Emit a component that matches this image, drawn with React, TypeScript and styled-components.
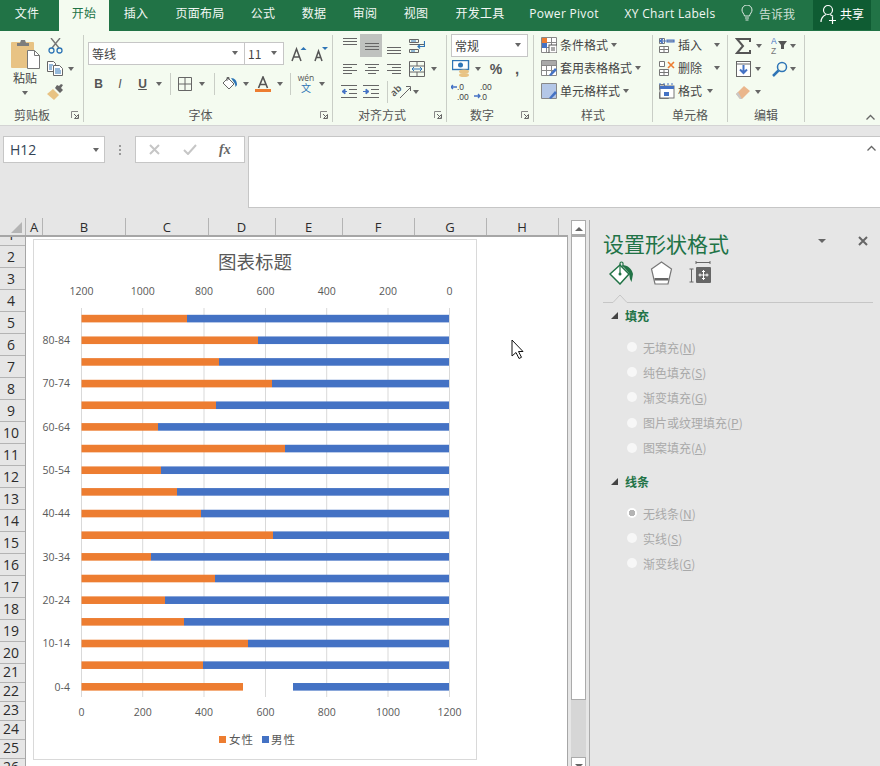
import React from "react";
import styled, { createGlobalStyle } from "styled-components";

const CJK = `"Noto Sans CJK SC", "Open Sans", sans-serif`;
const LATIN = `"Open Sans", "Noto Sans CJK SC", sans-serif`;
const GREEN = "#217346";
const BLUE = "#4472c4";
const ORANGE = "#ed7d31";

const GlobalStyle = createGlobalStyle`
  html, body {
    margin: 0;
    padding: 0;
    overflow: hidden;
    background: #e6e6e6;
  }
`;

const Page = styled.div`
  width: 880px;
  height: 766px;
  overflow: hidden;
  display: flex;
  flex-direction: column;
  background: #e6e6e6;
  font-family: ${CJK};
  font-size: 12px;
  color: #444;
`;

/* ---- tabs ---- */
const TabBar = styled.div`
  height: 31px;
  flex: none;
  display: flex;
  background: ${GREEN};
`;

const Tab = styled.div<{ $w: number; $active?: boolean; $shift?: number }>`
  width: ${p => p.$w}px;
  display: flex;
  align-items: center;
  justify-content: center;
  padding: 0 ${p => p.$shift ?? 0}px 5px 0;
  box-sizing: border-box;
  font-size: 12px;
  font-family: ${LATIN};
  letter-spacing: 0.3px;
  color: ${p => (p.$active ? GREEN : "#f2f7f4")};
  background: ${p => (p.$active ? "#f4fbf0" : "transparent")};
`;

const TellMe = styled.div`
  display: flex;
  align-items: center;
  gap: 5px;
  margin-left: 9px;
  width: 73px;
  padding-bottom: 5px;
  color: #cfe0d6;
`;

const Share = styled.div`
  width: 58px;
  height: 30px;
  display: flex;
  align-items: center;
  gap: 3px;
  padding: 0 0 3px 7px;
  box-sizing: border-box;
  background: #0f5c33;
  color: #fff;
`;

/* ---- ribbon ---- */
const Ribbon = styled.div`
  height: 95px;
  flex: none;
  box-sizing: border-box;
  display: flex;
  background: #f4fbf0;
  border-bottom: 1px solid #d4d4d4;
`;

const Group = styled.div<{ $w: number }>`
  width: ${p => p.$w}px;
  flex: none;
  display: flex;
  flex-direction: column;
`;

const GroupBody = styled.div<{ $left?: number }>`
  flex: 1;
  min-height: 0;
  padding: 3px 0 0 ${p => p.$left ?? 0}px;
  display: flex;
  flex-direction: column;
`;

const GroupLabel = styled.div`
  height: 20px;
  flex: none;
  box-sizing: border-box;
  display: flex;
  align-items: center;
  padding-bottom: 2px;
  color: #555;
`;

const LabelText = styled.span<{ $shift?: number }>`
  flex: 1;
  text-align: center;
  padding-right: ${p => p.$shift ?? 0}px;
`;

const Launcher = styled.svg`
  display: block;
  flex: none;
  margin: 2px 4px 0 0;
`;

const GroupDivider = styled.div`
  width: 1px;
  flex: none;
  margin: 4px 0 3px;
  background: #c9cec6;
`;

const RibbonEnd = styled.div`
  flex: 1;
  display: flex;
  align-items: flex-end;
  justify-content: flex-end;
  padding: 0 5px 5px 0;
`;

const Row = styled.div<{ $top?: number }>`
  height: 23px;
  flex: none;
  margin-top: ${p => p.$top ?? 0}px;
  display: flex;
  align-items: center;
`;

const Slot = styled.div<{ $w: number; $on?: boolean }>`
  width: ${p => p.$w}px;
  height: 23px;
  flex: none;
  display: flex;
  align-items: center;
  justify-content: center;
  background: ${p => (p.$on ? "#bfc2bf" : "transparent")};
`;

const Caret = styled.span<{ $left?: number; $top?: number }>`
  display: block;
  flex: none;
  width: 0;
  height: 0;
  margin-left: ${p => p.$left ?? 0}px;
  margin-top: ${p => p.$top ?? 0}px;
  border-left: 3.5px solid transparent;
  border-right: 3.5px solid transparent;
  border-top: 4px solid #666;
`;

const Sep = styled.span`
  display: block;
  width: 1px;
  height: 22px;
  background: #c9cec6;
`;

const Field = styled.div<{ $w: number; $joined?: boolean }>`
  width: ${p => p.$w}px;
  height: 23px;
  flex: none;
  box-sizing: border-box;
  display: flex;
  align-items: center;
  justify-content: space-between;
  padding: 0 6px 1px 3px;
  background: #fff;
  border: 1px solid #c6c6c6;
  border-left-width: ${p => (p.$joined ? 0 : 1)}px;
  color: #444;
`;

const PasteColumn = styled.div`
  width: 44px;
  flex: none;
  display: flex;
  flex-direction: column;
  align-items: center;
  padding: 5px 0 0 6px;
  box-sizing: border-box;
  gap: 1px;
`;

const PasteText = styled.span`
  font-size: 12px;
  line-height: 16px;
  color: #444;
`;

const ClipColumn = styled.div`
  display: flex;
  flex-direction: column;
`;

const ClipWrap = styled.div`
  display: flex;
`;

const LetterIcon = styled.span<{ $italic?: boolean; $under?: boolean; $size?: number }>`
  font-family: "Liberation Sans", sans-serif;
  font-size: ${p => p.$size ?? 12}px;
  font-weight: ${p => (p.$italic ? 400 : 700)};
  font-style: ${p => (p.$italic ? "italic" : "normal")};
  text-decoration: ${p => (p.$under ? "underline" : "none")};
  color: #555;
`;

const ActionRow = styled.div`
  height: 23px;
  flex: none;
  box-sizing: border-box;
  padding-bottom: 2px;
  display: flex;
  align-items: center;
  gap: 3px;
  color: #444;
`;

const ActionIcon = styled.div`
  width: 16px;
  height: 16px;
  flex: none;
`;

/* ---- formula bar ---- */
const FormulaRow = styled.div`
  height: 71px;
  flex: none;
  margin-top: 10px;
  display: flex;
  align-items: flex-start;
`;

const NameBox = styled.div`
  width: 102px;
  height: 27px;
  margin-left: 3px;
  box-sizing: border-box;
  display: flex;
  align-items: center;
  justify-content: space-between;
  padding: 0 5px 0 6px;
  background: #fff;
  border: 1px solid #c6c6c6;
  font-family: ${LATIN};
  font-size: 14px;
  color: #345;
`;

const Dots = styled.div`
  width: 30px;
  height: 27px;
  display: flex;
  flex-direction: column;
  align-items: center;
  justify-content: center;
  gap: 2px;
  & > i {
    width: 2px;
    height: 2px;
    background: #9a9a9a;
  }
`;

const FxBox = styled.div`
  width: 110px;
  height: 27px;
  box-sizing: border-box;
  display: flex;
  align-items: center;
  justify-content: space-around;
  padding: 0 2px;
  background: #fff;
  border: 1px solid #c6c6c6;
`;

const FxText = styled.span`
  font-family: "Liberation Serif", serif;
  font-size: 14px;
  font-weight: 700;
  font-style: italic;
  color: #666;
`;

const FormulaInput = styled.div`
  flex: 1;
  height: 72px;
  margin-left: 3px;
  box-sizing: border-box;
  display: flex;
  justify-content: flex-end;
  padding: 8px 4px 0 0;
  background: #fff;
  border: 1px solid #c6c6c6;
  border-right: 0;
`;

/* ---- sheet ---- */
const Workspace = styled.div`
  flex: 1;
  min-height: 0;
  margin-top: 11px;
  display: flex;
`;

const Sheet = styled.div`
  width: 568px;
  flex: none;
  display: flex;
  flex-direction: column;
`;

const ColumnHeader = styled.div`
  height: 19px;
  flex: none;
  box-sizing: border-box;
  display: flex;
  border-bottom: 2px solid #a6a6a6;
`;

const Corner = styled.div`
  width: 26px;
  flex: none;
  display: flex;
  align-items: flex-end;
  justify-content: flex-end;
  padding: 0 3px 2px 0;
  box-sizing: border-box;
  border-right: 1px solid #b4b4b4;
`;

const ColumnCell = styled.div<{ $w: number }>`
  width: ${p => p.$w}px;
  flex: none;
  box-sizing: border-box;
  display: flex;
  align-items: center;
  justify-content: center;
  border-right: 1px solid #b4b4b4;
  font-family: ${LATIN};
  font-size: 13px;
  color: #2c2c2c;
`;

const SheetBody = styled.div`
  flex: 1;
  min-height: 0;
  display: flex;
  overflow: hidden;
`;

const RowHeader = styled.div`
  width: 26px;
  flex: none;
  box-sizing: border-box;
  border-right: 1px solid #a6a6a6;
  overflow: hidden;
`;

const RowCell = styled.div<{ $h: number }>`
  height: ${p => p.$h}px;
  box-sizing: border-box;
  display: flex;
  align-items: flex-end;
  justify-content: center;
  padding-right: 3px;
  line-height: 20px;
  border-bottom: 1px solid #b4b4b4;
  font-family: ${LATIN};
  font-size: 14px;
  color: #2c2c2c;
`;

const Canvas = styled.div`
  flex: 1;
  position: relative;
  box-sizing: border-box;
  padding: 2px 0 0 7px;
  background: #fff;
  border-right: 1px solid #a6a6a6;
`;

const ChartFrame = styled.div`
  width: 444px;
  height: 521px;
  box-sizing: border-box;
  border: 1px solid #d9d9d9;
  overflow: hidden;
`;

const ChartSvg = styled.svg`
  display: block;
  margin: -1px;
  font-family: ${LATIN};
`;

const Pointer = styled.svg`
  position: absolute;
  left: 485px;
  top: 102px;
`;

const ScrollBar = styled.div`
  width: 15px;
  flex: none;
  margin: 2px 3px 0;
  display: flex;
  flex-direction: column;
  background: #d6d6d6;
`;

const ScrollButton = styled.div<{ $h: number }>`
  height: ${p => p.$h}px;
  flex: none;
  box-sizing: border-box;
  display: flex;
  justify-content: center;
  padding-top: 6px;
  background: #fff;
  border: 1px solid #ababab;
`;

const ScrollThumb = styled.div`
  height: 465px;
  flex: none;
  box-sizing: border-box;
  margin-bottom: 57px;
  background: #fff;
  border: 1px solid #ababab;
  border-top-width: 2px;
`;

const UpTriangle = styled.span`
  display: block;
  width: 0;
  height: 0;
  border-left: 4px solid transparent;
  border-right: 4px solid transparent;
  border-bottom: 4px solid #666;
`;

const DownTriangle = styled(UpTriangle)`
  border-bottom: 0;
  border-top: 4px solid #666;
`;

/* ---- side panel ---- */
const Panel = styled.div`
  flex: 1;
  margin-top: 2px;
  box-sizing: border-box;
  border-left: 1px solid #ababab;
  padding: 0 7px 0 13px;
  display: flex;
  flex-direction: column;
`;

const PanelHead = styled.div`
  height: 41px;
  flex: none;
  display: flex;
  align-items: center;
  justify-content: space-between;
  padding: 5px 5px 0 0;
  box-sizing: border-box;
`;

const PanelTitle = styled.div`
  font-size: 21px;
  color: ${GREEN};
`;

const PanelTools = styled.div`
  display: flex;
  align-items: center;
  gap: 32px;
  margin-bottom: 4px;
`;

const PanelTabs = styled.div`
  height: 33px;
  flex: none;
  display: flex;
  align-items: flex-start;
  padding-left: 6px;
  gap: 16px;
`;

const PanelRule = styled.svg`
  display: block;
  flex: none;
`;

const Section = styled.div<{ $gap: number }>`
  height: 25px;
  flex: none;
  margin-top: ${p => p.$gap}px;
  display: flex;
  align-items: center;
  gap: 7px;
  padding-left: 8px;
  font-size: 12px;
  font-weight: 700;
  color: ${GREEN};
`;

const SectionMark = styled.span`
  display: block;
  width: 0;
  height: 0;
  border-left: 7px solid transparent;
  border-bottom: 7px solid #444;
`;

const OptionList = styled.div`
  margin-top: 9px;
  display: flex;
  flex-direction: column;
  gap: 5px;
`;

const Option = styled.div`
  height: 20.2px;
  display: flex;
  align-items: center;
  gap: 6px;
  padding-left: 24px;
  color: #a9a9a9;
  font-size: 12px;
`;

const Radio = styled.span<{ $on?: boolean }>`
  width: 10px;
  height: 10px;
  flex: none;
  border-radius: 50%;
  background: ${p =>
    p.$on ? "radial-gradient(circle, #b4b4b4 0 3px, #fff 3.5px)" : "#f7f7f7"};
`;

const Mnemonic = styled.span`
  text-decoration: underline;
`;

/* ---- icons ---- */
const Svg: React.FC<{ w?: number; h?: number; children: React.ReactNode }> = ({ w = 16, h = 16, children }) => (
  <svg width={w} height={h} viewBox={`0 0 ${w} ${h}`} style={{ display: "block", flex: "none" }}>
    {children}
  </svg>
);

const LauncherIcon = () => (
  <Launcher width="8" height="8" viewBox="0 0 8 8">
    <path d="M.5 7V.5H7" fill="none" stroke="#888" />
    <path d="M3 3l3.5 3.5M7.5 3.5v4h-4z" fill="none" stroke="#666" />
  </Launcher>
);

const PasteIcon = () => (
  <Svg w={29} h={30}>
    <rect x="0" y="3" width="23" height="26" rx="1" fill="#e8c384" />
    <path d="M6 4h3l1-3h4l1 3h3v3H6z" fill="#7d7d7d" />
    <path d="M16.500 11.500h7l5 5v13h-12z" fill="#fff" stroke="#777" />
    <path d="M23.500 11.500v5h5" fill="none" stroke="#777" />
  </Svg>
);

const CutIcon = () => (
  <Svg w={15} h={16}>
    <path d="M3 0l8 10M12 0L4 10" stroke="#777" strokeWidth="1.4" />
    <circle cx="3.500" cy="12.500" r="2.500" fill="none" stroke="#2e75b6" strokeWidth="1.300" />
    <circle cx="11.500" cy="12.500" r="2.500" fill="none" stroke="#2e75b6" strokeWidth="1.300" />
  </Svg>
);

const CopyIcon = () => (
  <Svg w={16} h={15}>
    <path d="M.5.500h6l2 2v8h-8z" fill="#fff" stroke="#666" />
    <path d="M6.500 4.500h6l3 3v7h-9z" fill="#fff" stroke="#666" />
    <path d="M2 4h4M2 6h3M2 8h3" stroke="#2e75b6" />
    <path d="M8 8h5M8 10h6M8 12h6" stroke="#2e75b6" />
  </Svg>
);

const BrushIcon = () => (
  <Svg w={17} h={16}>
    <path d="M0 10l6-5 6 6-5 5z" fill="#e8c384" />
    <path d="M8 4l5 5 3-3-2-2 2-3-2-1-2 2-2-1z" fill="#666" />
  </Svg>
);

const GrowFont: React.FC<{ up?: boolean }> = ({ up }) => (
  <Svg w={16} h={16}>
    <path
      d={up ? "M1 15L5.500 3 10 15M2.800 11h5.400" : "M2 15L5.500 5 9 15M3.300 11.500h4.400"}
      fill="none"
      stroke="#555"
      strokeWidth="1.500"
    />
    <path d={up ? "M9.500 4l3-3 3 3z" : "M9 1h6l-3 3z"} fill="#2e75b6" />
  </Svg>
);

const BorderIcon = () => (
  <Svg w={14} h={14}>
    <path d="M.5.500h13v13H.5zM7 .5v13M.5 7h13" fill="none" stroke="#666" />
  </Svg>
);

const BucketIcon = () => (
  <Svg w={16} h={15}>
    <path d="M1 7l5-5 6 6-5 5z" fill="#fff" stroke="#666" />
    <path d="M5 5V1.500h2V4" fill="none" stroke="#666" />
    <path d="M9 2c4 0 6 3 6 7l-1.500 2L13 8z" fill="#2e75b6" />
  </Svg>
);

const FontColorIcon = () => (
  <Svg w={16} h={16}>
    <path d="M3.500 12L8 1l4.500 11M5 8.500h6" fill="none" stroke="#555" strokeWidth="1.600" />
    <rect x="0" y="13" width="16" height="3" fill={ORANGE} />
  </Svg>
);

const WenIcon = () => (
  <svg width="26" height="24" viewBox="0 0 26 24" style={{ display: "block", flex: "none", fontFamily: LATIN }}>
    <text x="13" y="9" textAnchor="middle" fontSize="8.500" fill="#555">wén</text>
    <text x="13" y="20" textAnchor="middle" fontSize="10" fill="#2e75b6" fontFamily={CJK}>文</text>
  </svg>
);

const Lines: React.FC<{ rows: [number, number, number][] }> = ({ rows }) => (
  <Svg w={15} h={16}>
    {rows.map(([x1, x2, y]) => (
      <path key={`${x1}-${y}`} d={`M${x1} ${y + 0.5}H${x2}`} stroke="#666" />
    ))}
  </Svg>
);

const WrapIcon = () => (
  <Svg w={16} h={16}>
    <path d="M.5 1.500h9v3h-9zM.5 11.500h9v3h-9zM.5 6.500h15" fill="none" stroke="#666" />
    <path d="M2 3h5M2 13h4" stroke="#2e75b6" />
    <path d="M15.500 3v5.500H9M11 6.500l-2 2 2 2" fill="none" stroke="#2e75b6" strokeWidth="1.200" />
  </Svg>
);

const MergeIcon = () => (
  <Svg w={16} h={16}>
    <path d="M.5.500h15v15H.5zM.5 5h15M.5 11h15M8 .5V5M8 11v4.500" fill="none" stroke="#666" />
    <path d="M3 8h10M5 6L3 8l2 2M11 6l2 2-2 2" fill="none" stroke="#2e75b6" />
  </Svg>
);

const IndentIcon: React.FC<{ flip?: boolean }> = ({ flip }) => (
  <Svg w={16} h={13}>
    <path d="M0 .5h16M8 4.500h8M8 8.500h8M0 12.500h16" stroke="#666" />
    <path d={flip ? "M0 6.500h5M3 4l3 2.500L3 9z" : "M6 6.500H1M4 4L1 6.500 4 9z"} fill={BLUE} stroke={BLUE} />
  </Svg>
);

const OrientationIcon = () => (
  <svg width="26" height="24" viewBox="0 0 26 24" style={{ display: "block", flex: "none", fontFamily: LATIN }}>
    <text x="5" y="17" fontSize="9.500" fontWeight="600" fill="#555" transform="rotate(-45 5 17)">ab</text>
    <path d="M11 18L21 8M17 6.500h4.500V11" fill="none" stroke="#666" />
  </svg>
);

const CurrencyIcon = () => (
  <Svg w={18} h={17}>
    <rect x="0.500" y="0.500" width="16" height="9" fill="#fff" stroke="#2e75b6" strokeWidth="1.400" />
    <circle cx="8.500" cy="5" r="2.500" fill="#2e75b6" />
    <ellipse cx="12" cy="11.500" rx="5" ry="2" fill="#e8c384" />
    <ellipse cx="12" cy="15" rx="5" ry="2" fill="#e8c384" />
  </Svg>
);

const DecimalIcon: React.FC<{ more?: boolean }> = ({ more }) => (
  <svg width="20" height="18" viewBox="0 0 20 18" style={{ display: "block", fontFamily: "Liberation Sans", fontSize: 8.5, fill: "#444" }}>
    <text x="6" y="7">{more ? ".00" : ".0"}</text>
    <text x="6" y="16.500">{more ? ".0" : ".00"}</text>
    <path d={more ? "M0 13h6M4 11l2 2-2 2" : "M6 4H0M2 2L0 4l2 2"} fill="none" stroke={BLUE} strokeWidth="1.300" />
  </svg>
);

const TableIcon: React.FC<{ kind: "cond" | "table" | "style" }> = ({ kind }) => (
  <Svg>
    <path d="M.5.500h15v15H.5zM5.500.5v15M10.500.5v15M.5 5.500h15M.5 10.500h15" fill="#fff" stroke="#888" />
    {kind === "cond" && (
      <>
        <rect x="1" y="1" width="5" height="5" fill={ORANGE} />
        <rect x="1" y="6" width="5" height="5" fill={BLUE} />
        <rect x="8" y="8" width="8" height="8" fill="#fff" stroke="#555" />
        <path d="M10 11h4M10 13h4" stroke="#555" />
      </>
    )}
    {kind === "table" && (
      <>
        <rect x="1" y="1" width="14" height="4" fill="#a9a9a9" />
        <path d="M8 15l6-7 2 2-6 6z" fill={BLUE} />
      </>
    )}
    {kind === "style" && (
      <>
        <rect x="1" y="1" width="14" height="14" fill="#b4c7e7" />
        <path d="M8 15l6-7 2 2-6 6z" fill={BLUE} />
      </>
    )}
  </Svg>
);

const CellIcon: React.FC<{ kind: "insert" | "delete" | "format" }> = ({ kind }) => (
  <Svg>
    <path d="M.5 9.500h9v6h-9zM5 9.500v6M.5 12.500h9M.5 1.500h5v5h-5z" fill="#fff" stroke="#777" />
    {kind === "insert" && <path d="M8 5h7V3H8zM7 4h-6M4 1.500L1 4l3 2.500" fill="#aaa" stroke={BLUE} strokeWidth="1.200" />}
    {kind === "delete" && <path d="M9 2l6 6M15 2L9 8" stroke={ORANGE} strokeWidth="1.600" />}
    {kind === "format" && (
      <>
        <rect x="1" y="3" width="14" height="12" fill="#fff" stroke="#777" />
        <rect x="1" y="3" width="14" height="3" fill={BLUE} />
        <rect x="5" y="9" width="5" height="4" fill={BLUE} />
        <path d="M0 1h16" stroke={BLUE} strokeDasharray="2 2" />
      </>
    )}
  </Svg>
);

const SigmaIcon = () => (
  <Svg>
    <path d="M15 4V1H2l6 7-6 7h13v-3" fill="none" stroke="#555" strokeWidth="2" />
  </Svg>
);

const SortIcon = () => (
  <svg width="18" height="19" viewBox="0 0 18 19" style={{ display: "block", fontFamily: "Liberation Sans", fontSize: 8.5 }}>
    <text x="0" y="8" fill={BLUE}>A</text>
    <text x="0" y="18" fill="#777">Z</text>
    <path d="M7 5h9l-3 4v4h-3V9z" fill="#555" />
  </svg>
);

const FillDownIcon = () => (
  <Svg w={15} h={16}>
    <rect x="0.500" y="0.500" width="14" height="15" fill="#fff" stroke="#666" />
    <path d="M.5 3h14" stroke="#666" />
    <path d="M7.500 4v8M4 8.500l3.500 3.500L11 8.500" fill="none" stroke={BLUE} strokeWidth="2" />
  </Svg>
);

const FindIcon = () => (
  <Svg>
    <circle cx="10" cy="6" r="4.500" fill="none" stroke="#2e75b6" strokeWidth="1.500" />
    <path d="M6.500 9.500L1 15" stroke="#2e75b6" strokeWidth="2.500" />
  </Svg>
);

const EraserIcon = () => (
  <Svg>
    <path d="M1 10l8-8 6 5-8 8H5z" fill="#eab68c" />
    <path d="M1 10l4 5h2L3 8z" fill="#c8c8c8" />
  </Svg>
);

const BulbIcon = () => (
  <Svg w={14} h={16}>
    <path d="M4.500 11C4 8.500 2 7.500 2 5a5 5 0 0 1 10 0c0 2.500-2 3.500-2.500 6zM5 13h4M5.500 15h3" fill="none" stroke="#dfeae4" />
  </Svg>
);

const UserPlusIcon = () => (
  <Svg w={17} h={20}>
    <circle cx="8" cy="6" r="4.500" fill="none" stroke="#fff" strokeWidth="1.200" />
    <path d="M1 18c0-4 2-6 5-7.500M10 10.500c1 .5 2 1 3 2" fill="none" stroke="#fff" strokeWidth="1.200" />
    <path d="M9 16.500h7M12.500 13v7" stroke="#fff" strokeWidth="1.200" />
  </Svg>
);

const CloseMark: React.FC<{ size: number; color: string; width?: number }> = ({ size, color, width = 2 }) => (
  <Svg w={size} h={size}>
    <path d={`M1 1L${size - 1} ${size - 1}M${size - 1} 1L1 ${size - 1}`} stroke={color} strokeWidth={width} />
  </Svg>
);

const PanelFillIcon = () => (
  <Svg w={25} h={24}>
    <path d="M1 13l10-9 9 9-9 10z" fill="#fff" stroke={GREEN} strokeWidth="1.500" />
    <path d="M11 13V2.500a1.500 1.500 0 0 1 3 0V6" fill="none" stroke={GREEN} strokeWidth="1.200" />
    <circle cx="11" cy="13" r="1.500" fill={GREEN} />
    <path d="M13 4c6 0 10 4 11 9l-1.500 8-1.500-3-1-6z" fill={GREEN} />
  </Svg>
);

const PanelShapeIcon = () => (
  <Svg w={23} h={24}>
    <path d="M11.500 1l10 7-3.500 15H5L1.500 8z" fill="#fff" stroke="#777" strokeWidth="1.200" />
    <rect x="4.500" y="17" width="14" height="2.500" fill="#666" />
  </Svg>
);

const PanelSizeIcon = () => (
  <Svg w={22} h={22}>
    <path d="M7 1.500h14M7 0v3M21 0v3M.5 8h4M.5 21h4M2.500 8v13" fill="none" stroke="#666" />
    <rect x="7" y="6" width="15" height="16" rx="1" fill="#666" />
    <path d="M14.500 9v10M9.500 14h10" stroke="#fff" />
    <path d="M13 10.500h3M13 17.500h3M11 12.500v3M18 12.500v3" stroke="#fff" />
  </Svg>
);

/* ---- data ---- */
const TABS = [
  { name: "文件", w: 59, shift: 5 },
  { name: "开始", w: 50, active: true },
  { name: "插入", w: 54 },
  { name: "页面布局", w: 74 },
  { name: "公式", w: 52 },
  { name: "数据", w: 50 },
  { name: "审阅", w: 52 },
  { name: "视图", w: 50 },
  { name: "开发工具", w: 78 },
  { name: "Power Pivot", w: 90 },
  { name: "XY Chart Labels", w: 122 },
];

const COLUMNS = [
  { name: "A", w: 17 },
  { name: "B", w: 83 },
  { name: "C", w: 82.5 },
  { name: "D", w: 67 },
  { name: "E", w: 67 },
  { name: "F", w: 72 },
  { name: "G", w: 72 },
  { name: "H", w: 72 },
];

const ROWS = Array.from({ length: 26 }, (_, i) => {
  const n = i + 1;
  return { n, h: n === 1 ? 9 : n <= 20 ? 22 : 19 };
});

const BAR_ENDS = [187, 258, 219, 272, 216, 158, 285, 161, 177, 201, 273, 151, 215, 165, 184, 248, 203, 243];
const CATEGORIES = ["80-84", "70-74", "60-64", "50-54", "40-44", "30-34", "20-24", "10-14", "0-4"];
const GRID_X = [81.5, 142.7, 204, 265.5, 326.7, 388, 449.5];
const TOP_TICKS = ["1200", "1000", "800", "600", "400", "200", "0"];
const BOTTOM_TICKS = ["0", "200", "400", "600", "800", "1000", "1200"];

const FILL_OPTIONS = [
  { label: "无填充", key: "N" },
  { label: "纯色填充", key: "S" },
  { label: "渐变填充", key: "G" },
  { label: "图片或纹理填充", key: "P" },
  { label: "图案填充", key: "A" },
];

const LINE_OPTIONS = [
  { label: "无线条", key: "N", on: true },
  { label: "实线", key: "S" },
  { label: "渐变线", key: "G" },
];

const rowY = (i: number) => 318.6 + i * 21.66;

const Chart = () => (
  <ChartSvg width="444" height="521" viewBox="33 239 444 521">
    <text x="255" y="269" textAnchor="middle" fontSize="18.500" fill="#595959" fontFamily={CJK}>
      图表标题
    </text>
    {GRID_X.map((x, i) => (
      <g key={x}>
        <path d={`M${x} 308V697`} stroke="#d9d9d9" />
        <text x={x} y="295" textAnchor="middle" fontSize="10.500" fill="#595959">
          {TOP_TICKS[i]}
        </text>
        <text x={x} y="716" textAnchor="middle" fontSize="10.500" fill="#595959">
          {BOTTOM_TICKS[i]}
        </text>
      </g>
    ))}
    {BAR_ENDS.map((end, i) => (
      <g key={i}>
        <rect x="81.500" y={rowY(i) - 3.8} width={end - 81.5} height="7.600" fill={ORANGE} />
        <rect
          x={i === 17 ? 293 : end}
          y={rowY(i) - 3.8}
          width={449 - (i === 17 ? 293 : end)}
          height="7.600"
          fill={BLUE}
        />
      </g>
    ))}
    {CATEGORIES.map((label, i) => (
      <text key={label} x="70" y={rowY(i * 2 + 1) + 3.8} textAnchor="end" fontSize="10.500" fill="#595959">
        {label}
      </text>
    ))}
    <rect x="219" y="736" width="7" height="7" fill={ORANGE} />
    <text x="229" y="743.500" fontSize="11.500" letterSpacing="1" fill="#595959" fontFamily={CJK}>
      女性
    </text>
    <rect x="262" y="736" width="7" height="7" fill={BLUE} />
    <text x="271" y="743.500" fontSize="11.500" letterSpacing="1" fill="#595959" fontFamily={CJK}>
      男性
    </text>
  </ChartSvg>
);

const App: React.FC = () => {
  return (
    <Page>
      <GlobalStyle />
      <TabBar>
        {TABS.map(tab => (
          <Tab key={tab.name} $w={tab.w} $active={tab.active} $shift={tab.shift}>
            {tab.name}
          </Tab>
        ))}
        <TellMe>
          <BulbIcon />
          告诉我
        </TellMe>
        <Share>
          <UserPlusIcon />
          共享
        </Share>
      </TabBar>

      <Ribbon>
        <Group $w={83}>
          <GroupBody>
            <ClipWrap>
              <PasteColumn>
                <PasteIcon />
                <PasteText>粘贴</PasteText>
                <Caret $top={4} />
              </PasteColumn>
              <ClipColumn>
                <Slot $w={22}><CutIcon /></Slot>
                <Row>
                  <Slot $w={22}><CopyIcon /></Slot>
                  <Caret $left={2} />
                </Row>
                <Slot $w={22}><BrushIcon /></Slot>
              </ClipColumn>
            </ClipWrap>
          </GroupBody>
          <GroupLabel>
            <LabelText $shift={7}>剪贴板</LabelText>
            <LauncherIcon />
          </GroupLabel>
        </Group>
        <GroupDivider />

        <Group $w={248}>
          <GroupBody $left={4}>
            <Row $top={8}>
              <Field $w={157}>
                等线
                <Caret />
              </Field>
              <Field $w={39} $joined>
                11
                <Caret />
              </Field>
              <Slot $w={5} />
              <Slot $w={20}><GrowFont up /></Slot>
              <Slot $w={2} />
              <Slot $w={20}><GrowFont /></Slot>
            </Row>
            <Row $top={7}>
              <Slot $w={21}><LetterIcon>B</LetterIcon></Slot>
              <Slot $w={22}><LetterIcon $italic>I</LetterIcon></Slot>
              <Slot $w={23}><LetterIcon $under>U</LetterIcon></Slot>
              <Slot $w={10}><Caret /></Slot>
              <Slot $w={12}><Sep /></Slot>
              <Slot $w={18}><BorderIcon /></Slot>
              <Slot $w={16}><Caret /></Slot>
              <Slot $w={8}><Sep /></Slot>
              <Slot $w={24}><BucketIcon /></Slot>
              <Slot $w={7}><Caret /></Slot>
              <Slot $w={27}><FontColorIcon /></Slot>
              <Slot $w={7}><Caret /></Slot>
              <Slot $w={14}><Sep /></Slot>
              <Slot $w={18}><WenIcon /></Slot>
              <Slot $w={14}><Caret /></Slot>
            </Row>
          </GroupBody>
          <GroupLabel>
            <LabelText $shift={3}>字体</LabelText>
            <LauncherIcon />
          </GroupLabel>
        </Group>
        <GroupDivider />

        <Group $w={113}>
          <GroupBody $left={5}>
            <Row>
              <Slot $w={22}><Lines rows={[[1, 15, 0], [1, 15, 3], [1, 15, 6]]} /></Slot>
              <Slot $w={22} $on><Lines rows={[[1, 15, 5], [1, 15, 8], [1, 15, 11]]} /></Slot>
              <Slot $w={22}><Lines rows={[[1, 15, 9], [1, 15, 12], [1, 15, 15]]} /></Slot>
              <Slot $w={26}><WrapIcon /></Slot>
            </Row>
            <Row>
              <Slot $w={22}><Lines rows={[[1, 15, 3], [1, 10, 6], [1, 15, 9], [1, 10, 12]]} /></Slot>
              <Slot $w={22}><Lines rows={[[1, 15, 3], [4, 12, 6], [1, 15, 9], [4, 12, 12]]} /></Slot>
              <Slot $w={22}><Lines rows={[[1, 15, 3], [6, 15, 6], [1, 15, 9], [6, 15, 12]]} /></Slot>
              <Slot $w={26}><MergeIcon /></Slot>
              <Slot $w={8}><Caret /></Slot>
            </Row>
            <Row>
              <Slot $w={22}><IndentIcon /></Slot>
              <Slot $w={22}><IndentIcon flip /></Slot>
              <Slot $w={10}><Sep /></Slot>
              <Slot $w={20}><OrientationIcon /></Slot>
              <Slot $w={8}><Caret /></Slot>
            </Row>
          </GroupBody>
          <GroupLabel>
            <LabelText $shift={3}>对齐方式</LabelText>
            <LauncherIcon />
          </GroupLabel>
        </Group>
        <GroupDivider />

        <Group $w={86}>
          <GroupBody $left={4}>
            <Row>
              <Field $w={77}>
                常规
                <Caret />
              </Field>
            </Row>
            <Row>
              <Slot $w={20}><CurrencyIcon /></Slot>
              <Slot $w={14}><Caret /></Slot>
              <Slot $w={22}><LetterIcon $size={14}>%</LetterIcon></Slot>
              <Slot $w={20}><LetterIcon $size={15}>,</LetterIcon></Slot>
            </Row>
            <Row>
              <Slot $w={20}><DecimalIcon /></Slot>
              <Slot $w={3} />
              <Slot $w={20}><DecimalIcon more /></Slot>
            </Row>
          </GroupBody>
          <GroupLabel>
            <LabelText $shift={4}>数字</LabelText>
            <LauncherIcon />
          </GroupLabel>
        </Group>
        <GroupDivider />

        <Group $w={118}>
          <GroupBody $left={7}>
            <ActionRow>
              <ActionIcon><TableIcon kind="cond" /></ActionIcon>
              条件格式
              <Caret />
            </ActionRow>
            <ActionRow>
              <ActionIcon><TableIcon kind="table" /></ActionIcon>
              套用表格格式
              <Caret />
            </ActionRow>
            <ActionRow>
              <ActionIcon><TableIcon kind="style" /></ActionIcon>
              单元格样式
              <Caret />
            </ActionRow>
          </GroupBody>
          <GroupLabel>
            <LabelText>样式</LabelText>
          </GroupLabel>
        </Group>
        <GroupDivider />

        <Group $w={74}>
          <GroupBody $left={6}>
            <ActionRow>
              <ActionIcon><CellIcon kind="insert" /></ActionIcon>
              插入
              <Caret $left={9} />
            </ActionRow>
            <ActionRow>
              <ActionIcon><CellIcon kind="delete" /></ActionIcon>
              删除
              <Caret $left={9} />
            </ActionRow>
            <ActionRow>
              <ActionIcon><CellIcon kind="format" /></ActionIcon>
              格式
              <Caret $left={2} />
            </ActionRow>
          </GroupBody>
          <GroupLabel>
            <LabelText>单元格</LabelText>
          </GroupLabel>
        </Group>
        <GroupDivider />

        <Group $w={76}>
          <GroupBody $left={6}>
            <Row>
              <Slot $w={18}><SigmaIcon /></Slot>
              <Slot $w={14}><Caret /></Slot>
              <Slot $w={5} />
              <Slot $w={18}><SortIcon /></Slot>
              <Slot $w={8}><Caret /></Slot>
            </Row>
            <Row>
              <Slot $w={18}><FillDownIcon /></Slot>
              <Slot $w={12}><Caret /></Slot>
              <Slot $w={7} />
              <Slot $w={18}><FindIcon /></Slot>
              <Slot $w={8}><Caret /></Slot>
            </Row>
            <Row>
              <Slot $w={18}><EraserIcon /></Slot>
              <Slot $w={12}><Caret /></Slot>
            </Row>
          </GroupBody>
          <GroupLabel>
            <LabelText>编辑</LabelText>
          </GroupLabel>
        </Group>
        <GroupDivider />

        <RibbonEnd>
          <Svg w={9} h={6}>
            <path d="M.5 5.500l4-4 4 4" fill="none" stroke="#666" strokeWidth="1.300" />
          </Svg>
        </RibbonEnd>
      </Ribbon>

      <FormulaRow>
        <NameBox>
          H12
          <Caret />
        </NameBox>
        <Dots>
          <i />
          <i />
          <i />
        </Dots>
        <FxBox>
          <CloseMark size={11} color="#c6c6c6" />
          <Svg w={14} h={11}>
            <path d="M1 6l4 4 8-9" fill="none" stroke="#c6c6c6" strokeWidth="2" />
          </Svg>
          <FxText>fx</FxText>
        </FxBox>
        <FormulaInput>
          <Svg w={9} h={6}>
            <path d="M.5 5.500l4-4 4 4" fill="none" stroke="#666" strokeWidth="1.300" />
          </Svg>
        </FormulaInput>
      </FormulaRow>

      <Workspace>
        <Sheet>
          <ColumnHeader>
            <Corner>
              <Svg w={11} h={11}>
                <path d="M11 0v11H0z" fill="#b4b4b4" />
              </Svg>
            </Corner>
            {COLUMNS.map(col => (
              <ColumnCell key={col.name} $w={col.w}>
                {col.name}
              </ColumnCell>
            ))}
          </ColumnHeader>
          <SheetBody>
            <RowHeader>
              {ROWS.map(row => (
                <RowCell key={row.n} $h={row.h}>
                  {row.n}
                </RowCell>
              ))}
            </RowHeader>
            <Canvas>
              <ChartFrame>
                <Chart />
              </ChartFrame>
              <Pointer width="14" height="21" viewBox="0 0 14 21">
                <path d="M1 1v16l4-3.500 3 6 2.500-1.200-3-5.800H12z" fill="#fff" stroke="#111" />
              </Pointer>
            </Canvas>
          </SheetBody>
        </Sheet>

        <ScrollBar>
          <ScrollButton $h={15}>
            <UpTriangle />
          </ScrollButton>
          <ScrollThumb />
          <ScrollButton $h={15}>
            <DownTriangle />
          </ScrollButton>
        </ScrollBar>

        <Panel>
          <PanelHead>
            <PanelTitle>设置形状格式</PanelTitle>
            <PanelTools>
              <DownTriangle />
              <CloseMark size={10} color="#666" />
            </PanelTools>
          </PanelHead>
          <PanelTabs>
            <PanelFillIcon />
            <PanelShapeIcon />
            <PanelSizeIcon />
          </PanelTabs>
          <PanelRule width="270" height="9" viewBox="0 0 270 9">
            <path d="M0 8.500H10L17 1l7 7.500H270" fill="none" stroke="#c6c6c6" />
          </PanelRule>
          <Section $gap={0}>
            <SectionMark />
            填充
          </Section>
          <OptionList>
            {FILL_OPTIONS.map(opt => (
              <Option key={opt.key}>
                <Radio />
                <span>
                  {opt.label}(<Mnemonic>{opt.key}</Mnemonic>)
                </span>
              </Option>
            ))}
          </OptionList>
          <Section $gap={11}>
            <SectionMark />
            线条
          </Section>
          <OptionList>
            {LINE_OPTIONS.map(opt => (
              <Option key={opt.key}>
                <Radio $on={opt.on} />
                <span>
                  {opt.label}(<Mnemonic>{opt.key}</Mnemonic>)
                </span>
              </Option>
            ))}
          </OptionList>
        </Panel>
      </Workspace>
    </Page>
  );
};

export default App;
